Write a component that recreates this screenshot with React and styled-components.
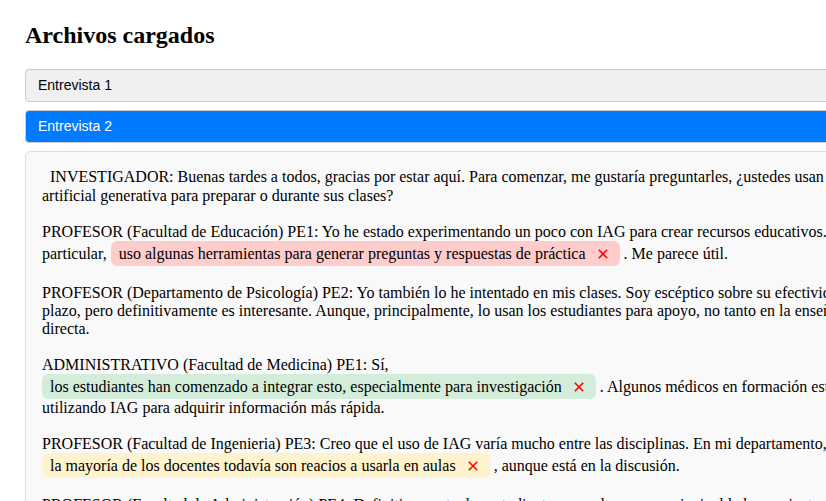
import React from 'react';
import styled, { createGlobalStyle } from 'styled-components';

const Global = createGlobalStyle`
  html, body {
    margin: 0;
    padding: 0;
    background: #ffffff;
    overflow: hidden;
  }
`;

const tones = {
  red: '#ffcccc',
  green: '#d4edda',
  yellow: '#fff3cd',
};

const transcript = [
  ['  INVESTIGADOR: Buenas tardes a todos, gracias por estar aquí. Para comenzar, me gustaría preguntarles, ¿ustedes usan inteligencia artificial generativa para preparar o durante sus clases?'],
  [
    'PROFESOR (Facultad de Educación) PE1: Yo he estado experimentando un poco con IAG para crear recursos educativos. En particular, ',
    { tone: 'red', text: 'uso algunas herramientas para generar preguntas y respuestas de práctica' },
    ' . Me parece útil.',
  ],
  ['PROFESOR (Departamento de Psicología) PE2: Yo también lo he intentado en mis clases. Soy escéptico sobre su efectividad a largo plazo, pero definitivamente es interesante. Aunque, principalmente, lo usan los estudiantes para apoyo, no tanto en la enseñanza directa.'],
  [
    'ADMINISTRATIVO (Facultad de Medicina) PE1: Sí, ',
    { tone: 'green', text: 'los estudiantes han comenzado a integrar esto, especialmente para investigación' },
    ' . Algunos médicos en formación están utilizando IAG para adquirir información más rápida.',
  ],
  [
    'PROFESOR (Facultad de Ingenieria) PE3: Creo que el uso de IAG varía mucho entre las disciplinas. En mi departamento, ',
    { tone: 'yellow', text: 'la mayoría de los docentes todavía son reacios a usarla en aulas' },
    ' , aunque está en la discusión.',
  ],
  ['PROFESOR (Facultad de Administración) PE4: Definitivamente, los estudiantes usan de manera principal la herramienta para resumir lecturas y preparar sus trabajos escritos.'],
];

export default function App() {
  return (
    <Page>
      <Global />
      <Title>Archivos cargados</Title>
      <Files>
        <FileBar>Entrevista 1</FileBar>
        <FileBar active>Entrevista 2</FileBar>
        <Viewer>
          {transcript.map((parts, i) => (
            <Paragraph key={i}>
              {parts.map((part, j) =>
                typeof part === 'string' ? (
                  <React.Fragment key={j}>{part}</React.Fragment>
                ) : (
                  <Mark key={j} tone={part.tone}>
                    {part.text}
                    <RemoveButton aria-label="Quitar">
                      <svg width="10" height="10" viewBox="0 0 10 10">
                        <path d="M0.8 0.8 L9.2 9.2 M9.2 0.8 L0.8 9.2" stroke="#ff0000" strokeWidth="1.6" fill="none" />
                      </svg>
                    </RemoveButton>
                  </Mark>
                )
              )}
            </Paragraph>
          ))}
        </Viewer>
      </Files>
    </Page>
  );
}

const Page = styled.div`
  padding: 22px 0 0 25px;
  width: 900px;
  font-family: "Liberation Serif", "Times New Roman", serif;
  color: #000;
`;

const Title = styled.h2`
  margin: 0 0 19px;
  font-size: 24px;
  font-weight: bold;
  line-height: 27.6px;
`;

const Files = styled.div`
  display: flex;
  flex-direction: column;
  gap: 8px;
`;

const FileBar = styled.div`
  padding: 8px 12px;
  line-height: 15px;
  font-family: "Liberation Sans", Arial, sans-serif;
  font-size: 14px;
  border: 1px solid #cccccc;
  border-radius: 4px;
  background: ${p => (p.active ? '#007bff' : '#f0f0f0')};
  color: ${p => (p.active ? '#ffffff' : '#000000')};
`;

const Viewer = styled.div`
  padding: 15px 16px 16px;
  background: #f9f9f9;
  border: 1px solid #dddddd;
  border-radius: 6px;
  font-size: 16px;
`;

const Paragraph = styled.p`
  margin: 0 0 18px;
  white-space: pre-wrap;
  line-height: normal;

  &:first-child {
    line-height: 19.4px;
  }
`;

const Mark = styled.span`
  display: inline-block;
  padding: 4px 8px 3px;
  border-radius: 6px;
  background: ${p => tones[p.tone]};
  white-space: nowrap;
`;

const RemoveButton = styled.button`
  margin-left: 8px;
  padding: 0 4px;
  border: none;
  background: none;
  line-height: 10px;
  vertical-align: 0;
  cursor: pointer;
`;
